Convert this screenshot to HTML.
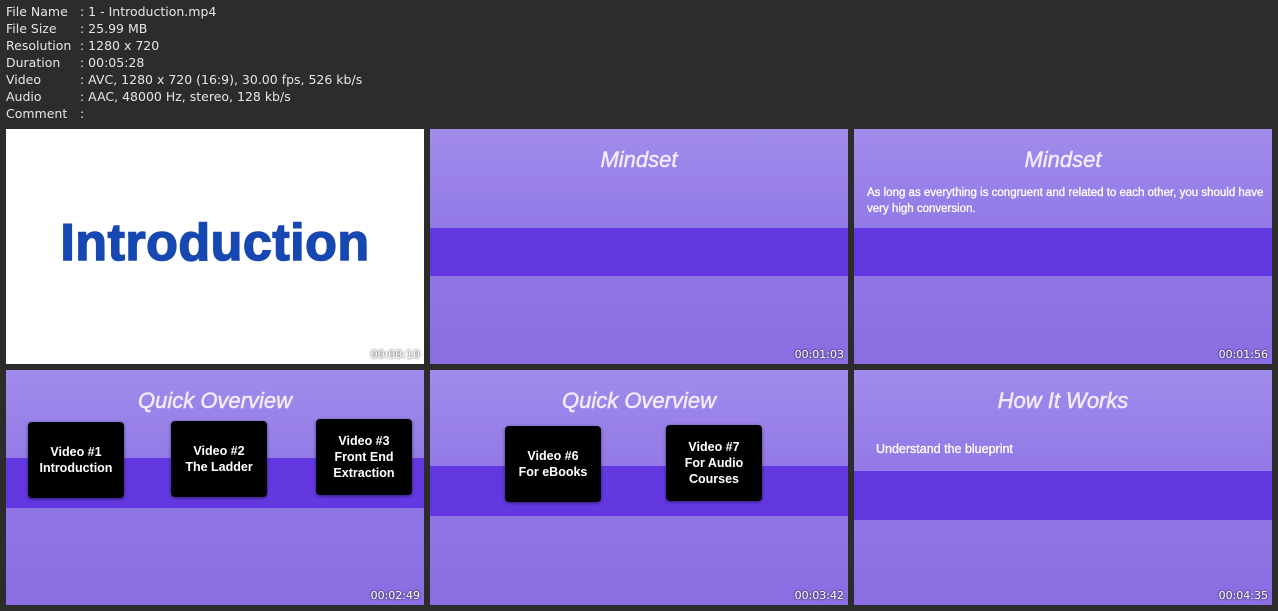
<!DOCTYPE html>
<html><head><style>
body{margin:0;width:1278px;height:611px;background:#2c2c2c;font-family:"DejaVu Sans","Liberation Sans",sans-serif;overflow:hidden;position:relative}
.info{position:absolute;left:6px;top:3px;color:#e6e6e6;font-size:12.5px;line-height:17px}
.info div{white-space:pre}
.info span{display:inline-block;width:74px}
.t{position:absolute;width:418px;height:235px;overflow:hidden;background:linear-gradient(#a18beb,#9178e6 45%,#8a6ee2)}
.band{position:absolute;left:0;right:0;background:#6438e0}
.ts{position:absolute;right:4px;bottom:3px;color:#fff;font-size:11px;text-shadow:0 0 2px #000}
.h{position:absolute;left:0;right:0;text-align:center;color:#f0ecff;font-family:"Liberation Sans",sans-serif;font-style:italic;font-size:22px;-webkit-text-stroke:0.5px #f0ecff}
.b{position:absolute;width:96px;height:76px;background:#000;border-radius:4px;color:#fff;font-family:"Liberation Sans",sans-serif;font-weight:bold;font-size:12.5px;line-height:16px;text-align:center;display:flex;align-items:center;justify-content:center;box-shadow:0 1px 3px rgba(0,0,0,.5)}
.p{position:absolute;color:#fff;font-family:"Liberation Sans",sans-serif;font-size:11.5px;line-height:16px;-webkit-text-stroke:0.3px #fff}
</style></head><body>
<div class="info">
<div><span>File Name</span>: 1 - Introduction.mp4</div>
<div><span>File Size</span>: 25.99 MB</div>
<div><span>Resolution</span>: 1280 x 720</div>
<div><span>Duration</span>: 00:05:28</div>
<div><span>Video</span>: AVC, 1280 x 720 (16:9), 30.00 fps, 526 kb/s</div>
<div><span>Audio</span>: AAC, 48000 Hz, stereo, 128 kb/s</div>
<div><span>Comment</span>:</div>
</div>

<div class="t" style="left:6px;top:129px;background:#fff">
<div style="position:absolute;left:0;right:0;top:84px;text-align:center;color:#1747b0;font-family:'Liberation Sans',sans-serif;font-weight:bold;font-size:52px;-webkit-text-stroke:1.5px #1747b0;letter-spacing:0.5px">Introduction</div>
<div class="ts">00:00:10</div></div>

<div class="t" style="left:430px;top:129px"><div class="band" style="top:99px;height:48px"></div>
<div class="h" style="top:18px">Mindset</div><div class="ts">00:01:03</div></div>

<div class="t" style="left:854px;top:129px"><div class="band" style="top:99px;height:48px"></div>
<div class="h" style="top:18px">Mindset</div>
<div class="p" style="left:13px;top:56px;width:404px">As long as everything is congruent and related to each other, you should have very high conversion.</div>
<div class="ts">00:01:56</div></div>

<div class="t" style="left:6px;top:370px"><div class="band" style="top:88px;height:50px"></div>
<div class="h" style="top:18px">Quick Overview</div>
<div class="b" style="left:22px;top:52px">Video #1<br>Introduction</div>
<div class="b" style="left:165px;top:51px">Video #2<br>The Ladder</div>
<div class="b" style="left:310px;top:49px">Video #3<br>Front End<br>Extraction</div>
<div class="ts">00:02:49</div></div>

<div class="t" style="left:430px;top:370px"><div class="band" style="top:96px;height:50px"></div>
<div class="h" style="top:18px">Quick Overview</div>
<div class="b" style="left:75px;top:56px">Video #6<br>For eBooks</div>
<div class="b" style="left:236px;top:55px">Video #7<br>For Audio<br>Courses</div>
<div class="ts">00:03:42</div></div>

<div class="t" style="left:854px;top:370px"><div class="band" style="top:101px;height:49px"></div>
<div class="h" style="top:18px">How It Works</div>
<div class="p" style="left:22px;top:71px;font-size:12.5px">Understand the blueprint</div>
<div class="ts">00:04:35</div></div>
</body></html>
